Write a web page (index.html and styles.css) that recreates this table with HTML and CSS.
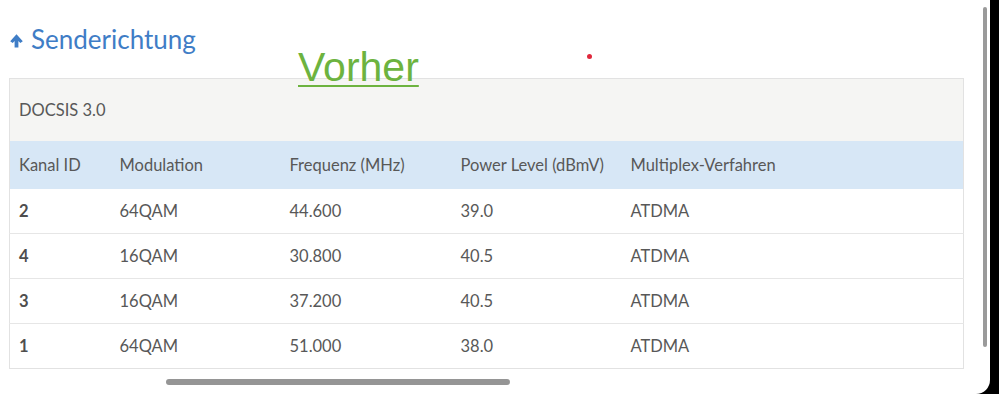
FILE: index.html
```html
<!DOCTYPE html>
<html lang="de">
<head>
<meta charset="utf-8">
<title>Senderichtung</title>
<link rel="stylesheet" href="styles.css">
</head>
<body>
<div class="screen">
  <div class="viewport">
    <h2 class="title">
      <svg class="arrow" width="13" height="14" viewBox="0 0 13 14"><path d="M6.5 0.3 L12.8 7.2 L10.3 8.9 L8.4 6.9 L8.4 13.6 L4.6 13.6 L4.6 6.9 L2.7 8.9 L0.2 7.2 Z" fill="#3f7dc6"/></svg>
      <span>Senderichtung</span>
    </h2>
    <div class="table-wrap">
      <table class="grid">
        <colgroup>
          <col class="c1"><col class="c2"><col class="c3"><col class="c4"><col class="c5">
        </colgroup>
        <thead>
          <tr class="caption-row"><th colspan="5">DOCSIS 3.0</th></tr>
          <tr class="head-row">
            <th>Kanal ID</th>
            <th>Modulation</th>
            <th>Frequenz (MHz)</th>
            <th>Power Level (dBmV)</th>
            <th>Multiplex-Verfahren</th>
          </tr>
        </thead>
        <tbody>
          <tr><td class="id">2</td><td>64QAM</td><td>44.600</td><td>39.0</td><td>ATDMA</td></tr>
          <tr><td class="id">4</td><td>16QAM</td><td>30.800</td><td>40.5</td><td>ATDMA</td></tr>
          <tr><td class="id">3</td><td>16QAM</td><td>37.200</td><td>40.5</td><td>ATDMA</td></tr>
          <tr><td class="id">1</td><td>64QAM</td><td>51.000</td><td>38.0</td><td>ATDMA</td></tr>
        </tbody>
      </table>
    </div>
    <div class="hscroll"></div>
    <div class="vscroll"></div>
    <a class="note" href="#">Vorher</a>
    <span class="dot"></span>
  </div>
  <div class="bezel"></div>
</div>
</body>
</html>
```
FILE: styles.css
```css
html, body {
  margin: 0;
  padding: 0;
  background: #000;
}
.screen {
  display: flex;
  width: 999px;
  height: 394px;
  overflow: hidden;
}
.viewport {
  position: relative;
  width: 990px;
  height: 394px;
  background: #fff;
  border-bottom-right-radius: 14px;
  font-family: Lato, "Open Sans", sans-serif;
  color: #585858;
}
.bezel {
  flex: 1;
  background: #000;
}
.title {
  margin: 0;
  padding: 25px 0 0 10px;
  height: 53px;
  box-sizing: border-box;
  display: flex;
  align-items: center;
  gap: 8px;
  font-size: 26px;
  font-weight: 400;
  line-height: 30px;
  color: #3f7dc6;
}
.arrow {
  display: block;
  margin-top: 3px;
}
.table-wrap {
  margin: 25px 0 0 9px;
  width: 955px;
}
.grid {
  width: 100%;
  border-collapse: collapse;
  border: 1px solid #e2e2e2;
  font-size: 16.5px;
  table-layout: fixed;
}
.grid th, .grid td {
  text-align: left;
  font-weight: 400;
  padding: 0 9px;
  white-space: nowrap;
}
.caption-row th {
  height: 62px;
  background: #f5f5f3;
}
.head-row th {
  height: 48px;
  background: #d7e7f6;
}
.c1 { width: 101px; }
.c2 { width: 170px; }
.c3 { width: 171px; }
.c4 { width: 170px; }
.grid tbody td {
  height: 44px;
  border-top: 1px solid #e6e6e6;
}
.grid tbody tr:first-child td {
  border-top: none;
}
.grid .id {
  font-weight: 700;
  color: #4e4e4e;
}
.hscroll {
  position: absolute;
  left: 166px;
  top: 379px;
  width: 344px;
  height: 6px;
  border-radius: 3px;
  background: #959595;
}
.vscroll {
  position: absolute;
  left: 983px;
  top: 7px;
  width: 4px;
  height: 340px;
  border-radius: 2px;
  background: #9a9a9a;
}
.note {
  position: absolute;
  left: 298px;
  top: 44px;
  font-family: "Liberation Sans", Arial, sans-serif;
  font-size: 41px;
  line-height: 47px;
  color: #6db33f;
  text-decoration: underline;
  text-decoration-thickness: 2px;
  text-underline-offset: 4px;
}
.dot {
  position: absolute;
  left: 587px;
  top: 54px;
  width: 5px;
  height: 5px;
  border-radius: 50%;
  background: #e0283c;
}
```
